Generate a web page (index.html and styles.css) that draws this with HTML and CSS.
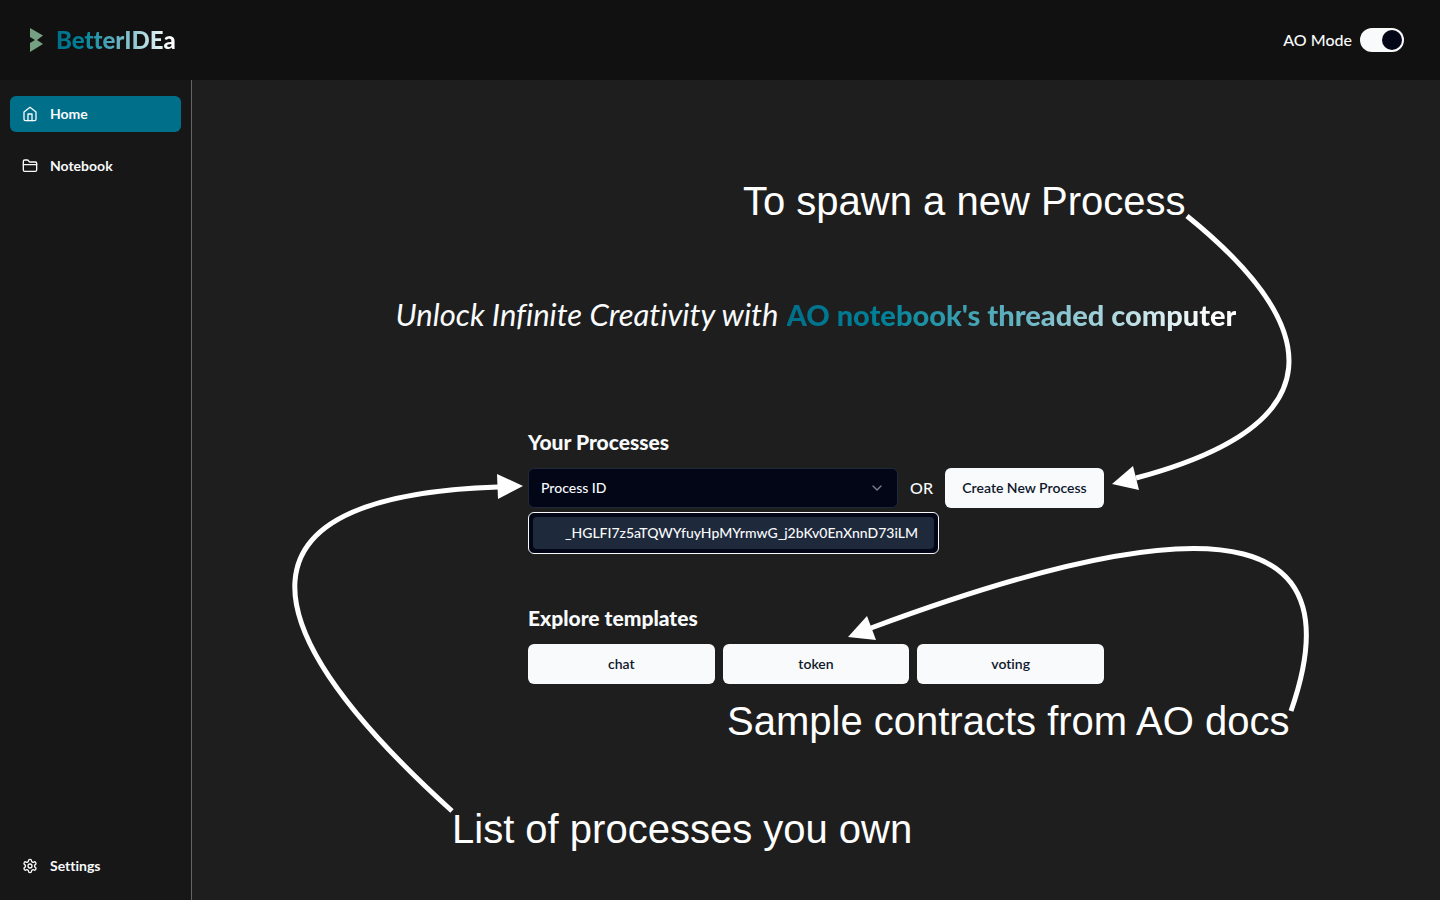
FILE: index.html
```html
<!DOCTYPE html>
<html lang="en">
<head>
<meta charset="utf-8">
<title>BetterIDEa</title>
<link rel="stylesheet" href="styles.css">
</head>
<body>
<header class="topbar">
  <a class="brand" href="#">
    <svg class="brand-mark" viewBox="0 0 14 24" aria-hidden="true"><path d="M1 0L14 7.500L8 12L14 16L1 24V15L6 12L1 9Z"/></svg>
    <span class="brand-name gradient">BetterIDEa</span>
  </a>
  <label class="mode">AO Mode <input class="switch" type="checkbox" role="switch" checked></label>
</header>
<div class="shell">
  <nav class="sidebar">
    <a class="nav-link active" href="#"><svg class="icon" viewBox="0 0 24 24"><path d="m3 9 9-7 9 7v11a2 2 0 0 1-2 2H5a2 2 0 0 1-2-2z"/><path d="M9 22V12h6v10"/></svg>Home</a>
    <a class="nav-link" href="#"><svg class="icon" viewBox="0 0 24 24"><path d="M20 20a2 2 0 0 0 2-2V8a2 2 0 0 0-2-2h-7.900a2 2 0 0 1-1.690-.900L9.600 3.900A2 2 0 0 0 7.930 3H4a2 2 0 0 0-2 2v13a2 2 0 0 0 2 2Z"/><path d="M2 10h20"/></svg>Notebook</a>
    <a class="nav-link bottom" href="#"><svg class="icon" viewBox="0 0 24 24"><path d="M12.220 2h-.440a2 2 0 0 0-2 2v.180a2 2 0 0 1-1 1.730l-.430.250a2 2 0 0 1-2 0l-.150-.080a2 2 0 0 0-2.730.730l-.220.380a2 2 0 0 0 .730 2.730l.150.100a2 2 0 0 1 1 1.720v.510a2 2 0 0 1-1 1.740l-.150.090a2 2 0 0 0-.730 2.730l.220.380a2 2 0 0 0 2.730.730l.150-.080a2 2 0 0 1 2 0l.430.250a2 2 0 0 1 1 1.730V20a2 2 0 0 0 2 2h.440a2 2 0 0 0 2-2v-.180a2 2 0 0 1 1-1.730l.430-.250a2 2 0 0 1 2 0l.150.080a2 2 0 0 0 2.730-.730l.220-.390a2 2 0 0 0-.730-2.730l-.150-.080a2 2 0 0 1-1-1.740v-.500a2 2 0 0 1 1-1.740l.150-.090a2 2 0 0 0 .730-2.730l-.220-.380a2 2 0 0 0-2.730-.730l-.150.080a2 2 0 0 1-2 0l-.430-.250a2 2 0 0 1-1-1.730V4a2 2 0 0 0-2-2z"/><circle cx="12" cy="12" r="3"/></svg>Settings</a>
  </nav>
  <main class="main">
    <h1 class="headline"><em>Unlock Infinite Creativity with</em><strong class="gradient">AO notebook's threaded computer</strong></h1>
    <div class="panels">
      <section class="panel">
        <h2 class="title">Your Processes</h2>
        <div class="process-row">
          <div class="picker">
            <button class="picker-button" type="button" aria-haspopup="listbox" aria-expanded="true">Process ID <svg class="icon chevron" viewBox="0 0 24 24"><path d="m6 9 6 6 6-6"/></svg></button>
            <div class="menu" role="listbox"><button class="menu-item" type="button" role="option">_HGLFI7z5aTQWYfuyHpMYrmwG_j2bKv0EnXnnD73iLM</button></div>
          </div>
          <span class="or">OR</span>
          <button class="button create" type="button">Create New Process</button>
        </div>
      </section>
      <section class="panel">
        <h2 class="title">Explore templates</h2>
        <div class="templates">
          <button class="button" type="button">chat</button>
          <button class="button" type="button">token</button>
          <button class="button" type="button">voting</button>
        </div>
      </section>
    </div>
    <div class="notes">
      <svg class="arrows" viewBox="192 80 1248 820" aria-hidden="true">
        <path class="line" d="M1187 216C1323 326 1339 424 1136 478"/>
        <path class="head" d="M1112 484L1133 466L1139 490Z"/>
        <path class="line" d="M1291 711C1350 542 1245 489 871 628"/>
        <path class="head" d="M848 637L867 616L876 640Z"/>
        <path class="line" d="M452 811C242 621 228 496 498 487"/>
        <path class="head" d="M523 486L497 474L498 499Z"/>
      </svg>
      <p class="note spawn">To spawn a new Process</p>
      <p class="note sample">Sample contracts from AO docs</p>
      <p class="note owned">List of processes you own</p>
    </div>
  </main>
</div>
</body>
</html>
```
FILE: styles.css
```css
* { box-sizing: border-box; }
body {
  margin: 0;
  min-height: 100vh;
  display: flex;
  flex-direction: column;
  background: #1e1e1e;
  color: #f8fafc;
  font: 500 16px/24px Lato, "Noto Sans", sans-serif;
  font-variant-ligatures: none;
}
a { color: inherit; text-decoration: none; }
button { font: inherit; font-variant-ligatures: none; color: inherit; border: 0; }
.topbar {
  height: 80px;
  padding: 0 36px 0 29px;
  display: flex;
  align-items: center;
  justify-content: space-between;
  background: #111;
}
.brand { display: flex; align-items: center; gap: 13px; }
.brand-mark { width: 14px; height: 24px; fill: #76a082; }
.brand-name { font-size: 24px; line-height: 32px; font-weight: 900; }
.gradient {
  background: linear-gradient(90deg, #006f8a, #008299 22%, #b5dbe2 75%, #fff 95%);
  background-clip: text;
  -webkit-background-clip: text;
  color: transparent;
}
.mode { display: flex; align-items: center; gap: 8px; }
.switch {
  appearance: none;
  width: 44px;
  height: 24px;
  margin: 0;
  padding: 2px;
  display: flex;
  justify-content: flex-end;
  border-radius: 12px;
  background: #f8fafc;
}
.switch::before { content: ""; width: 20px; height: 20px; border-radius: 50%; background: #020617; }
.shell { flex: 1; display: flex; }
.sidebar {
  width: 192px;
  padding: 16px 10px;
  display: flex;
  flex-direction: column;
  gap: 16px;
  background: #171717;
  border-right: 1px solid #646464;
}
.nav-link {
  height: 36px;
  padding: 0 12px;
  display: flex;
  align-items: center;
  gap: 12px;
  border-radius: 6px;
  font-size: 14px;
  line-height: 20px;
  font-weight: 700;
}
.active { background: #006f8a; }
.bottom { margin-top: auto; }
.icon {
  width: 16px;
  height: 16px;
  fill: none;
  stroke: currentColor;
  stroke-width: 2;
  stroke-linecap: round;
  stroke-linejoin: round;
}
.main {
  flex: 1;
  position: relative;
  display: flex;
  flex-direction: column;
  align-items: center;
  padding-top: 214px;
}
.headline {
  margin: 0 0 93px;
  display: flex;
  align-items: baseline;
  gap: 8px;
  font-size: 31px;
  line-height: 40px;
  font-weight: 400;
}
.headline strong { font-size: 29px; font-weight: 900; }
.panels { width: 576px; display: flex; flex-direction: column; gap: 96px; }
.title { margin: 0 0 12px; font-size: 21px; line-height: 28px; font-weight: 900; }
.process-row { display: flex; align-items: center; gap: 12px; }
.picker { flex: 1; position: relative; font-size: 14px; }
.picker-button {
  width: 100%;
  height: 40px;
  padding: 0 12px;
  display: flex;
  align-items: center;
  justify-content: space-between;
  border: 1px solid #1e293b;
  border-radius: 6px;
  background: #020617;
}
.chevron { opacity: 0.5; }
.menu {
  position: absolute;
  top: 44px;
  left: 0;
  min-width: 411px;
  padding: 4px;
  border: 1px solid #f8fafc;
  border-radius: 6px;
  background: #020617;
}
.menu-item {
  width: 100%;
  height: 32px;
  padding: 0 8px 0 32px;
  border-radius: 4px;
  background: #1e293b;
  text-align: left;
  white-space: nowrap;
}
.button {
  height: 40px;
  padding: 0 16px;
  border-radius: 6px;
  background: #f8fafc;
  color: #0f172a;
  font-size: 14px;
  font-weight: 600;
}
.create { min-width: 159px; }
.templates { display: grid; grid-template-columns: repeat(3, 1fr); gap: 8px; }
.notes { position: absolute; top: 0; left: 50%; pointer-events: none; }
.arrows { position: absolute; top: 0; left: -624px; width: 1248px; height: 820px; }
.line { fill: none; stroke: #fff; stroke-width: 5; }
.head { fill: #fff; }
.note {
  position: absolute;
  margin: 0;
  font: 40px/48px "Liberation Sans", Arial, sans-serif;
  color: #fff;
  white-space: nowrap;
}
.spawn { top: 97px; left: -73px; }
.sample { top: 617px; left: -89px; }
.owned { top: 725px; left: -364px; }
```
